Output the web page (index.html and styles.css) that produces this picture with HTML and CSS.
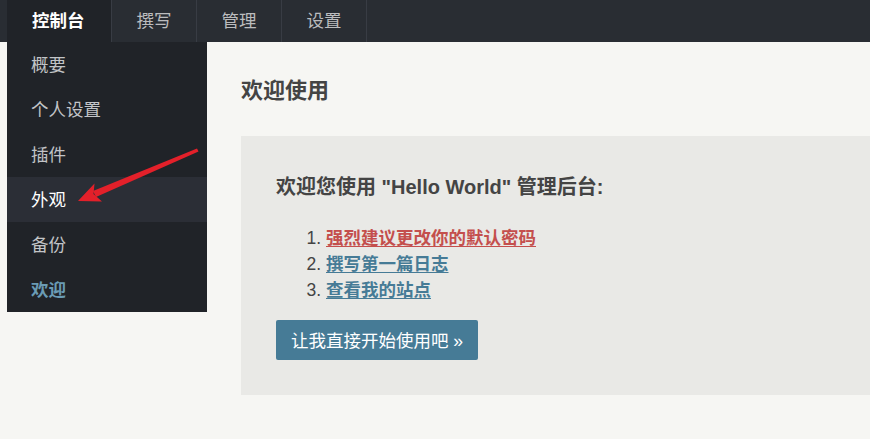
FILE: index.html
```html
<!DOCTYPE html>
<html lang="zh-CN">
<head>
<meta charset="utf-8">
<title>控制台</title>
<link rel="stylesheet" href="styles.css">
</head>
<body>
<nav class="topnav">
  <a class="tab tab-active" href="#">控制台</a>
  <a class="tab" href="#">撰写</a>
  <a class="tab" href="#">管理</a>
  <a class="tab" href="#">设置</a>
</nav>
<div class="layout">
  <ul class="sidemenu">
    <li class="item">概要</li>
    <li class="item">个人设置</li>
    <li class="item">插件</li>
    <li class="item item-focus">外观</li>
    <li class="item">备份</li>
    <li class="item item-current">欢迎</li>
  </ul>
  <main class="main">
    <h2 class="title">欢迎使用</h2>
    <section class="board">
      <h3 class="board-title">欢迎您使用 "Hello World" 管理后台:</h3>
      <ol class="steps">
        <li><a class="link link-warn" href="#">强烈建议更改你的默认密码</a></li>
        <li><a class="link" href="#">撰写第一篇日志</a></li>
        <li><a class="link" href="#">查看我的站点</a></li>
      </ol>
      <a class="btn" href="#">让我直接开始使用吧 »</a>
    </section>
  </main>
</div>
<svg class="arrow" width="870" height="439" viewBox="0 0 870 439" xmlns="http://www.w3.org/2000/svg">
  <polygon points="197,148.5 198.5,151.5 96,197 93,191" fill="#e3202a"/>
  <polygon points="78,201 94.5,183.5 93.5,194 102,201.5" fill="#e3202a"/>
</svg>
</body>
</html>
```
FILE: styles.css
```css
* { box-sizing: border-box; }
html, body { margin: 0; padding: 0; }
body {
  background: #f6f6f3;
  font-family: "Liberation Sans", "Noto Sans CJK SC", sans-serif;
  color: #444;
  width: 870px;
  height: 439px;
  overflow: hidden;
  position: relative;
}
a { text-decoration: none; }

.topnav {
  display: flex;
  height: 42px;
  background: #292d33;
  padding-left: 7px;
}
.tab {
  display: flex;
  align-items: center;
  height: 42px;
  padding: 0 24px 3px 25px;
  font-size: 17.5px;
  color: #bbbcbe;
  border-right: 1px solid #383c44;
}
.tab-active {
  background: #202328;
  color: #fff;
  font-weight: bold;
  padding-right: 26px;
}

.layout {
  display: flex;
  align-items: flex-start;
}
.sidemenu {
  list-style: none;
  margin: 0 0 0 7px;
  padding: 0;
  width: 200px;
  background: #202328;
}
.item {
  height: 45px;
  display: flex;
  align-items: center;
  padding: 0 0 3px 24px;
  font-size: 17.5px;
  color: #c2c4c7;
}
.item-focus {
  background: #2b2e36;
  color: #fff;
}
.item-current {
  color: #6a9bb5;
  font-weight: bold;
}

.main {
  flex: 1;
  padding: 34px 0 0 34px;
}
.title {
  margin: 0;
  font-size: 22px;
  line-height: 30px;
  font-weight: bold;
  color: #444;
}
.board {
  margin-top: 30px;
  background: #e9e9e6;
  padding: 37px 35px 35px;
  height: 259px;
}
.board-title {
  margin: 0;
  font-size: 20px;
  line-height: 28px;
  font-weight: bold;
  color: #444;
}
.steps {
  margin: 24px 0 0;
  padding-left: 50px;
  font-size: 17.5px;
  line-height: 26px;
  color: #444;
}
.link {
  color: #467b96;
  font-weight: bold;
  text-decoration: underline;
  text-underline-offset: 2px;
}
.link-warn { color: #c44f4d; }

.btn {
  display: inline-flex;
  align-items: center;
  margin-top: 17px;
  height: 40px;
  padding: 0 15px 2px;
  background: #467b96;
  color: #fff;
  font-size: 17.5px;
  border-radius: 2px;
}

.arrow {
  position: absolute;
  left: 0;
  top: 0;
  pointer-events: none;
}
```
